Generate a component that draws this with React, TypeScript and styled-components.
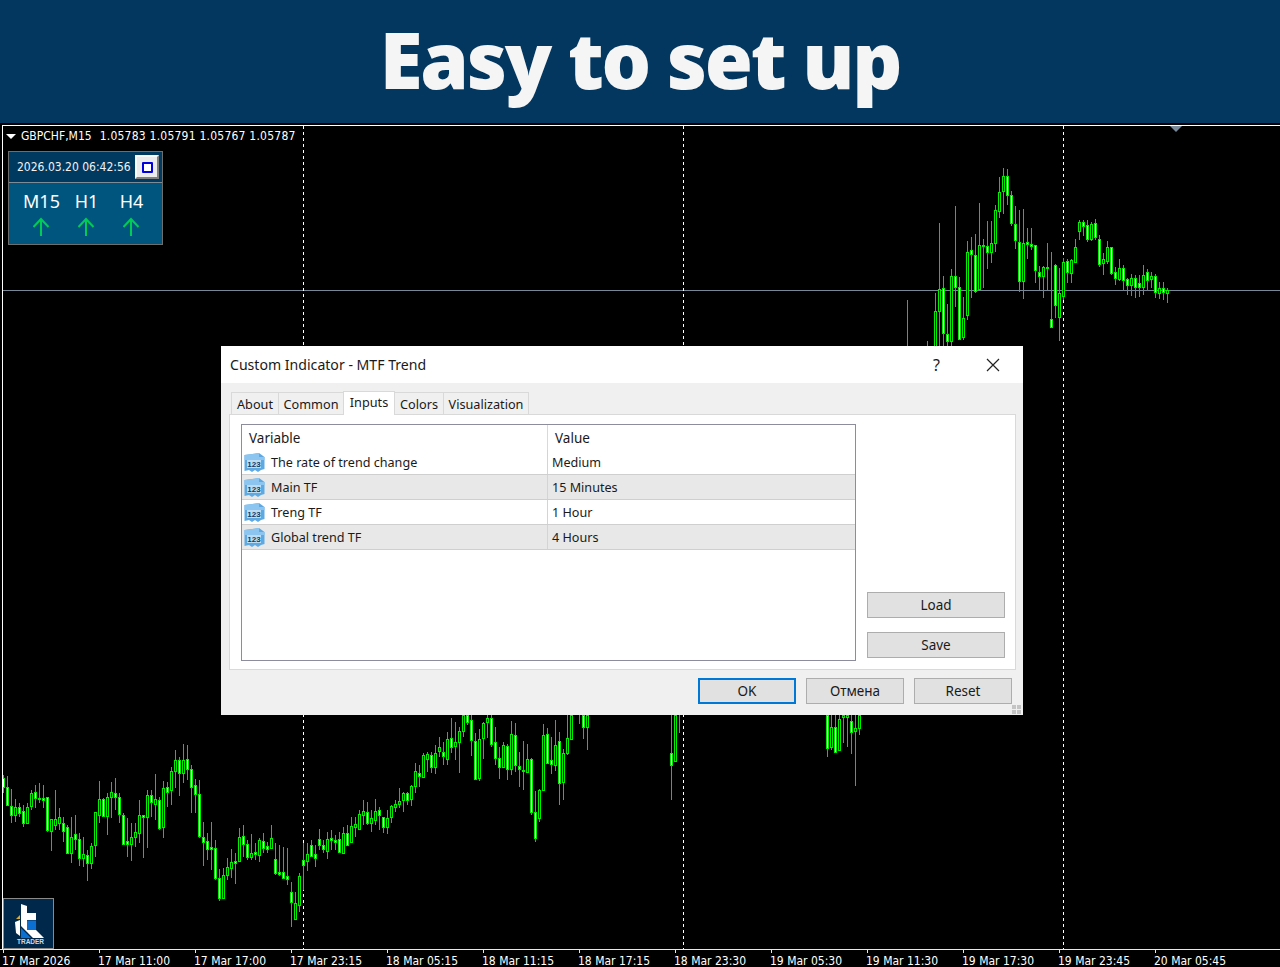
import styled, { createGlobalStyle } from 'styled-components';

// [high, bodyTop, bodyBottom, low, white body] measured on 3x crops
type Row = [number, number, number, number, number?];

const GlobalStyle = createGlobalStyle`
    html, body {
        margin: 0;
        padding: 0;
        background: #000;
    }
    * {
        box-sizing: border-box;
    }
`;

const lowerLeft: Row[] = [
    [195, 205, 230, 250, 1], [198, 230, 285, 285, 1], [237, 287, 315, 338, 1], [268, 290, 315, 335],
    [280, 292, 310, 320, 1], [285, 302, 340, 350, 1], [280, 290, 338, 340], [240, 250, 287, 300],
    [225, 247, 265, 295, 1], [220, 263, 267, 278, 1], [225, 265, 269, 295, 1], [260, 262, 360, 365, 1],
    [330, 328, 362, 423], [240, 328, 345, 360], [295, 322, 338, 360], [320, 340, 362, 395, 1],
    [345, 352, 430, 432, 1], [320, 380, 430, 458], [315, 373, 387, 420, 1], [370, 388, 445, 468, 1],
    [380, 433, 443, 470], [420, 436, 458, 513, 1], [400, 408, 458, 478], [305, 307, 404, 440],
    [213, 268, 314, 340], [265, 268, 317, 320, 1], [250, 262, 317, 375], [215, 247, 260, 325],
    [205, 250, 262, 300, 1], [250, 260, 313, 340, 1], [310, 316, 401, 405, 1], [325, 394, 401, 440, 1],
    [340, 382, 401, 452], [340, 367, 382, 410], [270, 316, 368, 400], [315, 316, 322, 445, 1],
    [240, 256, 322, 415], [240, 256, 275, 320, 1], [193, 268, 281, 330], [260, 271, 355, 360, 1],
    [213, 234, 352, 383], [215, 232, 247, 290, 1], [170, 184, 241, 285], [120, 151, 184, 235],
    [140, 151, 190, 258, 1], [102, 151, 190, 218], [105, 148, 178, 210, 1], [165, 176, 230, 308, 1],
    [208, 226, 251, 310, 1], [210, 253, 377, 385, 1], [335, 382, 395, 468, 1], [370, 394, 416, 450, 1],
    [335, 412, 416, 480, 1], [390, 415, 505, 510, 1], [478, 505, 563, 572, 1], [475, 495, 563, 568],
    [445, 472, 495, 510], [418, 457, 473, 505], [430, 454, 458, 522, 1], [355, 382, 452, 455],
    [345, 379, 403, 440, 1], [390, 403, 440, 450, 1], [373, 428, 442, 450], [400, 427, 431, 450, 1],
    [385, 391, 434, 455], [370, 394, 413, 430, 1], [395, 409, 416, 430, 1], [345, 385, 413, 417],
    [400, 448, 488, 495, 1], [405, 487, 491, 497, 1], [410, 487, 503, 505, 1], [415, 499, 506, 525, 1],
    [517, 547, 577, 650, 1], [545, 580, 627, 627], [490, 498, 586, 605], [400, 451, 464, 540, 1],
    [400, 431, 452, 483], [390, 404, 437, 440, 1], [405, 433, 445, 472, 1], [357, 388, 405, 420, 1],
    [390, 406, 416, 430, 1], [365, 388, 424, 447], [360, 385, 389, 420, 1], [375, 391, 395, 420, 1],
    [365, 388, 426, 430, 1], [350, 370, 428, 430], [345, 370, 404, 408, 1], [322, 349, 395, 397],
    [320, 343, 351, 380], [300, 313, 356, 358], [270, 304, 315, 345], [275, 307, 339, 345, 1],
    [300, 325, 339, 365], [268, 304, 330, 345], [290, 301, 316, 360, 1], [320, 322, 350, 370, 1],
    [300, 325, 350, 372], [285, 289, 322, 340], [270, 283, 290, 305], [235, 274, 282, 295],
    [245, 250, 269, 305], [245, 248, 270, 285, 1], [225, 229, 266, 288], [160, 184, 227, 250],
    [165, 190, 197, 230, 1], [128, 136, 201, 205], [125, 133, 146, 185], [125, 136, 170, 190, 1],
    [105, 130, 170, 192], [80, 112, 122, 140], [95, 127, 139, 165, 1], [65, 88, 146, 165],
];

const lowerMiddle: Row[] = [
    [40, 100, 125, 145, 1], [52, 112, 122, 165], [65, 79, 110, 205], [30, 30, 77, 95],
    [30, 30, 50, 60, 1], [30, 46, 104, 153, 1], [85, 109, 221, 225, 1], [72, 103, 218, 228],
    [52, 55, 100, 162], [30, 40, 50, 100], [30, 40, 116, 125, 1], [67, 112, 158, 180, 1],
    [125, 158, 185, 222, 1], [112, 121, 185, 185], [117, 124, 191, 225, 1], [48, 88, 191, 210],
    [55, 91, 179, 200, 1], [142, 184, 193, 246, 1], [108, 195, 197, 255, 1], [118, 163, 201, 205],
    [160, 163, 320, 330, 1], [258, 322, 398, 412, 1], [253, 256, 340, 350], [57, 91, 254, 254],
    [69, 88, 173, 175, 1], [96, 166, 176, 207, 1], [45, 121, 179, 198], [81, 109, 233, 300, 1],
    [133, 145, 231, 285], [30, 100, 143, 150], [30, 30, 101, 101], [30, 30, 30, 30],
    [30, 30, 30, 57], [30, 30, 67, 102, 1], [30, 30, 65, 135],
];

const lowerGapA: Row[] = [
    [30, 145, 179, 285, 1], [30, 30, 167, 167], [30, 30, 30, 84],
];

const lowerGapB: Row[] = [
    [30, 30, 128, 156, 1], [30, 67, 125, 135], [30, 65, 140, 140, 1], [30, 43, 134, 135],
    [30, 30, 36, 114], [30, 30, 36, 126], [30, 49, 80, 147, 1], [30, 70, 77, 243],
    [30, 30, 68, 90],
];

const upperSparse: Row[] = [[540, 690, 690, 690]];

const upper: Row[] = [
    [663, 690, 690, 690], [690, 690, 690, 690], [520, 574, 690, 690], [310, 508, 574, 690],
    [468, 505, 640, 690, 1], [552, 643, 664, 690, 1], [448, 469, 662, 690], [258, 469, 500, 560, 1],
    [472, 502, 658, 660, 1], [530, 595, 652, 660], [363, 397, 584, 600], [352, 391, 403, 535, 1],
    [342, 406, 512, 518, 1], [250, 376, 508, 510], [358, 376, 378, 505], [304, 379, 397, 447, 1],
    [302, 370, 395, 430], [255, 271, 368, 396], [172, 217, 274, 294], [144, 169, 214, 282],
    [148, 169, 226, 256, 1], [213, 226, 310, 318, 1], [258, 313, 361, 387, 1], [270, 367, 484, 516, 1],
    [267, 370, 484, 537], [325, 367, 371, 416, 1], [325, 373, 377, 390, 1], [375, 376, 451, 488, 1],
    [437, 455, 467, 510, 1], [437, 442, 467, 534], [370, 441, 443, 510, 1], [396, 598, 620, 620, 1],
    [433, 436, 556, 594, 1], [445, 520, 592, 662], [415, 427, 529, 540], [417, 424, 455, 488, 1],
    [417, 421, 458, 488], [358, 382, 425, 430], [300, 307, 332, 360], [300, 307, 319, 348, 1],
    [300, 316, 356, 365, 1], [305, 313, 358, 364], [297, 310, 352, 360, 1], [346, 358, 431, 440, 1],
    [400, 418, 430, 465], [363, 382, 422, 432], [380, 382, 458, 465, 1], [440, 457, 475, 495, 1],
    [418, 445, 478, 482], [435, 445, 481, 512, 1], [475, 478, 496, 525, 1], [462, 475, 496, 528],
    [465, 475, 500, 533, 1], [465, 490, 502, 530, 1], [435, 466, 500, 525], [447, 455, 481, 512, 1],
    [455, 469, 478, 505], [462, 469, 517, 534, 1], [485, 503, 520, 537], [487, 505, 517, 540, 1],
    [503, 511, 520, 548],
];

const series = [
    { x: 3, top: 710, rows: lowerLeft },
    { x: 451, top: 705, rows: lowerMiddle },
    { x: 671, top: 705, rows: lowerGapA },
    { x: 827, top: 705, rows: lowerGapB },
    { x: 907, top: 120, rows: upperSparse },
    { x: 927, top: 120, rows: upper },
];

const Candles = () => (
    <g shapeRendering='crispEdges'>
        {series.map((s) =>
            s.rows.map(([high, bodyTop, bodyBottom, low, white], i) => {
                const x = s.x + i * 4;
                const py = (v: number) => Math.round(s.top + v / 3);
                const hasBody = bodyBottom > bodyTop;
                return (
                    <g key={`${s.x}-${i}`}>
                        <line x1={x + 0.5} x2={x + 0.5} y1={py(high)} y2={py(low)} stroke='#00d800' />
                        {hasBody && (
                            <rect
                                x={x - 0.5}
                                y={py(bodyTop) + 0.5}
                                width={2}
                                height={Math.max(py(bodyBottom) - py(bodyTop), 1)}
                                fill={white ? '#ffffff' : '#000000'}
                                stroke='#00f000'
                            />
                        )}
                    </g>
                );
            })
        )}
    </g>
);

const axisLabels = [
    '17 Mar 2026', '17 Mar 11:00', '17 Mar 17:00', '17 Mar 23:15', '18 Mar 05:15', '18 Mar 11:15', '18 Mar 17:15',
    '18 Mar 23:30', '19 Mar 05:30', '19 Mar 11:30', '19 Mar 17:30', '19 Mar 23:45', '20 Mar 05:45',
];

const inputs = [
    { name: 'The rate of trend change', value: 'Medium' },
    { name: 'Main TF', value: '15 Minutes' },
    { name: 'Treng TF', value: '1 Hour' },
    { name: 'Global trend TF', value: '4 Hours' },
];

const tabs = ['About', 'Common', 'Inputs', 'Colors', 'Visualization'];
const tabWidths = [48, 66, 52, 50, 86];

const InputIcon = () => (
    <svg width='22' height='21' viewBox='0 0 22 21'>
        <path d='M0.5 3 L15 1 L20.5 5 L20.5 17 L17 18 L14 20 L11 18 L8 20 L5 18 L0.5 19 Z' fill='#5fa9e3' />
        <path d='M0.5 3 L15 1 L15 5 L20.5 5 L20.5 8 L0.5 8 Z' fill='#8cc6f0' />
        <rect x='3' y='8' width='14' height='8' fill='#bcdcf3' />
        <text x='10' y='15' textAnchor='middle' fontFamily='Liberation Sans, sans-serif' fontSize='8' fontWeight='700' fill='#0d3c66'>
            123
        </text>
    </svg>
);

const LogoMark = () => (
    <svg width='49' height='48' viewBox='1 1 49 48'>
        <path d='M18 6 L24 8 L24 15 L33 15 L33 22 L24 22 L24 32 L33 32 L41 40 L30 40 L24 34 L18 28 Z' fill='#ffffff' />
        <rect x='24' y='22.5' width='9' height='9.5' fill='#0a6fd0' />
        <path d='M18 30 L28 40 L18 40 Z' fill='#0a6fd0' />
        <path d='M12 24 L17 22 L17 38 L13 35 Z' fill='#ffffff' />
        <path d='M13 21 L17 17 L17 21 Z' fill='#e0a92a' />
        <text x='27.5' y='46' textAnchor='middle' fontFamily='Liberation Sans, sans-serif' fontSize='6.5' fontWeight='700' fill='#cfd8e2' textLength='27'>
            TRADER
        </text>
    </svg>
);

const UpArrow = () => (
    <svg width='18' height='20' viewBox='0 0 18 20'>
        <path d='M8 19 L8 2 M0.5 10 L8 2 L15.5 10' fill='none' stroke='#00cc55' strokeWidth='2' />
    </svg>
);

const App = () => {
    return (
        <Page>
            <GlobalStyle />
            <Banner>
                <Headline>Easy to set up</Headline>
            </Banner>
            <ChartFrame>
                <ChartArea>
                    <ChartSvg viewBox='3 126 1277 823'>
                        <g shapeRendering='crispEdges'>
                            <line x1='3' x2='1280' y1='290.5' y2='290.5' stroke='#778899' />
                            {[303.5, 683.5, 1063.5].map((x) => (
                                <line key={x} x1={x} x2={x} y1='126' y2='949' stroke='#ffffff' strokeDasharray='3 3' />
                            ))}
                        </g>
                        <Candles />
                        <path d='M1170 126 L1182 126 L1176 132 Z' fill='#778899' />
                    </ChartSvg>

                    <SymbolLine>
                        <DownMark />
                        <SymbolText>GBPCHF,M15</SymbolText>
                        <PriceText>1.05783 1.05791 1.05767 1.05787</PriceText>
                    </SymbolLine>

                    <TrendPanel>
                        <TrendHeader>
                            <TrendClock>2026.03.20 06:42:56</TrendClock>
                            <PanelButton>
                                <PanelButtonMark />
                            </PanelButton>
                        </TrendHeader>
                        <TrendBody>
                            {['M15', 'H1', 'H4'].map((tf) => (
                                <TrendColumn key={tf}>
                                    <TrendLabel>{tf}</TrendLabel>
                                    <UpArrow />
                                </TrendColumn>
                            ))}
                        </TrendBody>
                    </TrendPanel>

                    <LogoBox>
                        <LogoMark />
                    </LogoBox>

                    <Dialog>
                        <TitleBar>
                            <DialogTitle>Custom Indicator - MTF Trend</DialogTitle>
                            <HelpMark>?</HelpMark>
                            <svg width='14' height='14' viewBox='0 0 14 14'>
                                <path d='M1 1 L13 13 M13 1 L1 13' stroke='#222' strokeWidth='1.2' />
                            </svg>
                        </TitleBar>
                        <DialogBody>
                            <TabRow>
                                {tabs.map((tab, i) => (
                                    <Tab key={tab} $active={tab === 'Inputs'} $width={tabWidths[i]}>
                                        {tab}
                                    </Tab>
                                ))}
                            </TabRow>
                            <TabPanel>
                                <InputTable>
                                    <HeaderRow>
                                        <HeaderCell $width={306}>Variable</HeaderCell>
                                        <HeaderCell>Value</HeaderCell>
                                    </HeaderRow>
                                    {inputs.map((input, i) => (
                                        <InputRow key={input.name} $shaded={i % 2 === 1}>
                                            <NameCell>
                                                <InputIcon />
                                                <span>{input.name}</span>
                                            </NameCell>
                                            <ValueCell>{input.value}</ValueCell>
                                        </InputRow>
                                    ))}
                                </InputTable>
                                <SideActions>
                                    <SideButton>Load</SideButton>
                                    <SideButton>Save</SideButton>
                                </SideActions>
                            </TabPanel>
                            <Footer>
                                <FooterButton $primary>OK</FooterButton>
                                <FooterButton>Отмена</FooterButton>
                                <FooterButton>Reset</FooterButton>
                            </Footer>
                            <Grip viewBox='0 0 9 9' width='9' height='9'>
                                <path d='M0 5h4v4H0z M5 5h4v4H5z M5 0h4v4H5z M0 0h4v4H0z' fill='#c4c4c4' />
                            </Grip>
                        </DialogBody>
                    </Dialog>
                </ChartArea>
                <TimeAxis>
                    {axisLabels.map((label) => (
                        <AxisCell key={label}>{label}</AxisCell>
                    ))}
                </TimeAxis>
            </ChartFrame>
        </Page>
    );
};

const Page = styled.div`
    width: 1280px;
    height: 967px;
    display: flex;
    flex-direction: column;
    overflow: hidden;
    background: #000;
`;

const Banner = styled.header`
    height: 123px;
    background: #03375f;
    display: flex;
    justify-content: center;
`;

const Headline = styled.h1`
    margin: 0;
    font-family: 'Open Sans', 'Noto Sans', sans-serif;
    font-weight: 800;
    font-size: 78px;
    line-height: 118px;
    letter-spacing: -2.3px;
    color: #f5f5f5;
`;

const ChartFrame = styled.main`
    flex: 1;
    display: flex;
    flex-direction: column;
    padding-top: 2px;
    min-height: 0;
`;

const ChartArea = styled.div`
    position: relative;
    height: 824px;
    margin-left: 2px;
    border-top: 1px solid #fff;
    border-left: 1px solid #fff;
`;

const ChartSvg = styled.svg`
    display: block;
    width: 1277px;
    height: 823px;
`;

const SymbolLine = styled.div`
    position: absolute;
    left: 3px;
    top: 2px;
    display: flex;
    align-items: center;
    gap: 5px;
    height: 16px;
    font-family: 'DejaVu Sans Condensed', 'DejaVu Sans', sans-serif;
    font-stretch: condensed;
    font-size: 12px;
    color: #fff;
`;

const DownMark = styled.span`
    width: 0;
    height: 0;
    border-left: 5px solid transparent;
    border-right: 5px solid transparent;
    border-top: 5px solid #fff;
`;

const SymbolText = styled.span`
    white-space: pre;
`;

const PriceText = styled.span`
    margin-left: 3px;
    letter-spacing: 0.23px;
    white-space: pre;
`;

const TrendPanel = styled.div`
    position: absolute;
    left: 5px;
    top: 25px;
    width: 155px;
    height: 94px;
    border: 1px solid #6e6e6e;
    display: flex;
    flex-direction: column;
    background: #00557f;
`;

const TrendHeader = styled.div`
    height: 31px;
    display: flex;
    align-items: center;
    justify-content: space-between;
    padding: 0 3px 0 8px;
    background: #003a60;
    border-bottom: 1px solid #7d8b96;
`;

const TrendClock = styled.span`
    font-family: 'DejaVu Sans Condensed', 'DejaVu Sans', sans-serif;
    font-stretch: condensed;
    font-size: 12px;
    color: #f2f2f2;
`;

const PanelButton = styled.div`
    width: 24px;
    height: 24px;
    display: flex;
    align-items: center;
    justify-content: center;
    background: #ececec;
    border: 2px solid;
    border-color: #fafafa #808080 #808080 #fafafa;
`;

const PanelButtonMark = styled.span`
    width: 11px;
    height: 11px;
    border: 2px solid #0000e0;
    border-radius: 1px;
    background: #fff;
`;

const TrendBody = styled.div`
    flex: 1;
    display: grid;
    grid-template-columns: 45px 45px 45px;
    padding: 6px 0 0 10px;
`;

const TrendColumn = styled.div`
    display: flex;
    flex-direction: column;
    align-items: center;
    gap: 3px;
`;

const TrendLabel = styled.span`
    font-family: 'Noto Sans', sans-serif;
    font-size: 18px;
    line-height: 25px;
    color: #fff;
`;

const LogoBox = styled.div`
    position: absolute;
    left: 0;
    bottom: 0;
    width: 51px;
    height: 51px;
    background: #00284b;
    border: 1px solid #8a8a8a;
    display: flex;
`;

const Dialog = styled.section`
    position: absolute;
    left: 218px;
    top: 220px;
    width: 802px;
    height: 369px;
    display: flex;
    flex-direction: column;
    background: #f0f0f0;
    font-family: 'Noto Sans', sans-serif;
    color: #1a1a1a;
`;

const TitleBar = styled.div`
    height: 37px;
    flex-shrink: 0;
    display: flex;
    align-items: center;
    padding: 0 23px 0 9px;
    background: #fff;
`;

const DialogTitle = styled.span`
    flex: 1;
    font-size: 14.1px;
`;

const HelpMark = styled.span`
    font-size: 16px;
    margin-right: 46px;
`;

const DialogBody = styled.div`
    position: relative;
    flex: 1;
    padding: 7px 7px 0 8px;
`;

const TabRow = styled.div`
    display: flex;
    align-items: flex-end;
    height: 24px;
    padding-left: 2px;
`;

const Tab = styled.div<{ $active?: boolean; $width: number }>`
    width: ${(p) => p.$width}px;
    height: ${(p) => (p.$active ? 24 : 22)}px;
    display: flex;
    align-items: center;
    justify-content: center;
    font-size: 12.7px;
    padding-bottom: ${(p) => (p.$active ? 3 : 0)}px;
    background: ${(p) => (p.$active ? '#fff' : '#f0f0f0')};
    border: 1px solid #d9d9d9;
    border-bottom: none;
    margin-right: -1px;
    position: relative;
    z-index: ${(p) => (p.$active ? 1 : 0)};
    margin-bottom: ${(p) => (p.$active ? -1 : 0)}px;
`;

const TabPanel = styled.div`
    height: 256px;
    display: flex;
    padding: 9px 10px 8px 11px;
    gap: 11px;
    background: #fff;
    border: 1px solid #d9d9d9;
`;

const InputTable = styled.div`
    width: 615px;
    display: flex;
    flex-direction: column;
    border: 1px solid #8c8c9c;
    background: #fff;
`;

const HeaderRow = styled.div`
    display: flex;
    height: 25px;
    align-items: center;
    flex-shrink: 0;
`;

const HeaderCell = styled.div<{ $width?: number }>`
    ${(p) => (p.$width ? `width: ${p.$width}px; border-right: 1px solid #d9d9d9;` : '')}
    height: 100%;
    display: flex;
    align-items: center;
    padding-left: 7px;
    font-size: 13.5px;
`;

const InputRow = styled.div<{ $shaded: boolean }>`
    display: flex;
    height: 25px;
    flex-shrink: 0;
    align-items: center;
    font-size: 12.6px;
    background: ${(p) => (p.$shaded ? '#e8e8e8' : '#fff')};
    border-bottom: 1px solid #cfcfcf;
`;

const NameCell = styled.div`
    width: 306px;
    height: 100%;
    display: flex;
    align-items: center;
    gap: 5px;
    padding-left: 2px;
    border-right: 1px solid #d4d4d4;
`;

const ValueCell = styled.div`
    padding-left: 4px;
`;

const SideActions = styled.div`
    flex: 1;
    display: flex;
    flex-direction: column;
    justify-content: flex-end;
    gap: 14px;
    padding-bottom: 3px;
`;

const SideButton = styled.button`
    height: 26px;
    padding: 0;
    font-family: inherit;
    font-size: 13.5px;
    color: #1a1a1a;
    background: #e1e1e1;
    border: 1px solid #adadad;
`;

const Footer = styled.div`
    display: flex;
    justify-content: flex-end;
    gap: 10px;
    padding: 8px 4px 0 0;
`;

const FooterButton = styled.button<{ $primary?: boolean }>`
    width: 98px;
    height: 26px;
    padding: 0;
    font-family: inherit;
    font-size: 13.5px;
    color: #1a1a1a;
    background: #e1e1e1;
    border: ${(p) => (p.$primary ? '2px solid #0078d7' : '1px solid #adadad')};
`;

const Grip = styled.svg`
    position: absolute;
    right: 2px;
    bottom: 1px;
`;

const TimeAxis = styled.div`
    flex: 1;
    display: grid;
    grid-template-columns: repeat(13, 96px);
    padding-left: 3px;
    border-top: 1px solid #e8e8e8;
`;

const AxisCell = styled.div`
    position: relative;
    padding: 3px 0 0 0;
    margin-left: -1px;
    font-family: 'DejaVu Sans Condensed', 'DejaVu Sans', sans-serif;
    font-stretch: condensed;
    font-size: 12px;
    line-height: 16px;
    white-space: nowrap;
    color: #fff;

    &::before {
        content: '';
        position: absolute;
        left: 1px;
        top: 0;
        width: 1px;
        height: 3px;
        background: #e8e8e8;
    }
`;

export default App;
